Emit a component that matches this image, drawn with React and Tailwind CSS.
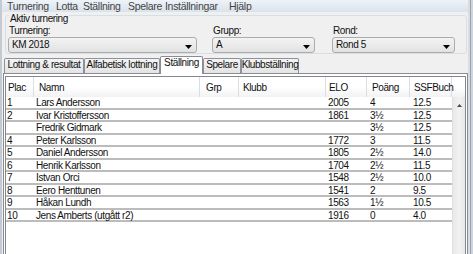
import React from 'react';

const MENU = [
  ['Turnering', 49],
  ['Lotta', 27],
  ['Ställning', 45],
  ['Spelare', 37],
  ['Inställningar', 64],
  ['Hjälp', 40],
];

const TABS = [
  { label: 'Lottning & resultat', w: 80 },
  { label: 'Alfabetisk lottning', w: 76 },
  { label: 'Ställning', w: 43, active: true },
  { label: 'Spelare', w: 38 },
  { label: 'Klubbställning', w: 58 },
];

// width, header padding, cell padding
const COLS = [
  { key: 'plac', title: 'Plac', w: 28, hp: 2, cp: 1 },
  { key: 'namn', title: 'Namn', w: 166, hp: 5, cp: 2 },
  { key: 'grp', title: 'Grp', w: 39, hp: 6, cp: 2 },
  { key: 'klubb', title: 'Klubb', w: 87, hp: 4, cp: 2 },
  { key: 'elo', title: 'ELO', w: 41, hp: 3, cp: 2 },
  { key: 'poang', title: 'Poäng', w: 43, hp: 5, cp: 3 },
  { key: 'buch', title: 'SSFBuch', w: 42, hp: 4, cp: 3 },
];

const ROWS = [
  { plac: '1', namn: 'Lars Andersson', elo: '2005', poang: '4', buch: '12.5' },
  { plac: '2', namn: 'Ivar Kristoffersson', elo: '1861', poang: '3½', buch: '12.5' },
  { plac: '', namn: 'Fredrik Gidmark', elo: '', poang: '3½', buch: '12.5' },
  { plac: '4', namn: 'Peter Karlsson', elo: '1772', poang: '3', buch: '11.5' },
  { plac: '5', namn: 'Daniel Andersson', elo: '1805', poang: '2½', buch: '14.0' },
  { plac: '6', namn: 'Henrik Karlsson', elo: '1704', poang: '2½', buch: '11.5' },
  { plac: '7', namn: 'Istvan Orci', elo: '1548', poang: '2½', buch: '10.0' },
  { plac: '8', namn: 'Eero Henttunen', elo: '1541', poang: '2', buch: '9.5' },
  { plac: '9', namn: 'Håkan Lundh', elo: '1563', poang: '1½', buch: '10.5' },
  { plac: '10', namn: 'Jens Amberts (utgått r2)', elo: '1916', poang: '0', buch: '4.0' },
];

function Combo({ value, w }) {
  return (
    <div
      className="h-[16px] flex items-center justify-between pl-[3px] pr-[4px] border border-[#acacac] rounded-[3px] bg-linear-to-b from-[#f3f3f3] to-[#e2e2e2]"
      style={{ width: w }}
    >
      <span className="leading-none">{value}</span>
      <svg width="7" height="4" viewBox="0 0 7 4" className="mt-[3px]">
        <path d="M0 0h7L3.5 4z" fill="#000" />
      </svg>
    </div>
  );
}

export default function App() {
  return (
    <div className="w-[473px] h-[254px] flex overflow-hidden bg-[#f0f0f0] text-[10px] leading-[12px] tracking-[-0.4px] text-[#111] font-['Liberation_Sans',Arial,sans-serif]">
      {/* left frame */}
      <div className="w-[2px] bg-[#c3cad2]" />

      <div className="w-[466px] flex flex-col">
        {/* menu bar */}
        <div className="h-[17px] flex items-center pl-[5px] bg-linear-to-b from-[#eef3f8] to-[#dae2ec] text-[#444] text-[10.5px] tracking-[-0.3px]">
          {MENU.map(([label, w]) => (
            <span key={label} style={{ width: w }} className="shrink-0">
              {label}
            </span>
          ))}
        </div>

        {/* Aktiv turnering */}
        <div className="relative mt-[3px] ml-[3px] w-[462px] h-[40px] border border-[#d5dfe5] rounded-[3px] pt-[9px] pl-[2px]">
          <span className="absolute left-[3px] -top-[3px] px-[1px] bg-[#f0f0f0]">
            Aktiv turnering
          </span>
          <div className="flex">
            <div className="w-[189px]">
              <div className="h-[12px] pl-[1px]">Turnering:</div>
              <Combo value="KM 2018" w={189} />
            </div>
            <div className="w-[103px] ml-[15px]">
              <div className="h-[12px] pl-[1px]">Grupp:</div>
              <Combo value="A" w={103} />
            </div>
            <div className="w-[123px] ml-[17px]">
              <div className="h-[12px] pl-[1px]">Rond:</div>
              <Combo value="Rond 5" w={123} />
            </div>
          </div>
        </div>

        {/* tabs */}
        <div className="mt-[2px] ml-[2px] h-[18px] flex items-end relative z-10">
          {TABS.map((t) =>
            t.active ? (
              <div
                key={t.label}
                style={{ width: t.w }}
                className="h-[18px] -mb-px flex justify-center bg-white border border-b-0 border-[#898c95] rounded-t-[2px]"
              >
                {t.label}
              </div>
            ) : (
              <div
                key={t.label}
                style={{ width: t.w }}
                className="h-[15px] flex justify-center bg-linear-to-b from-[#f4f4f4] to-[#e4e4e4] border border-b-0 border-[#8e9199] rounded-t-[2px]"
              >
                {t.label}
              </div>
            )
          )}
        </div>

        {/* tab panel */}
        <div className="ml-[1px] w-[465px] h-[200px] shrink-0 border border-[#898c95] bg-white px-[1px] pt-[2px]">
          <div className="h-full border border-[#828790] flex flex-col">
            {/* header */}
            <div className="h-[20px] flex bg-linear-to-b from-white via-white to-[#f1f2f4]">
              {COLS.map((c) => (
                <div
                  key={c.key}
                  style={{ width: c.w, paddingLeft: c.hp }}
                  className="h-full flex items-center pt-[2px] border-r border-[#dcdde0] shrink-0"
                >
                  {c.title}
                </div>
              ))}
              <div className="flex-1" />
            </div>

            <div className="flex flex-1">
              {/* rows */}
              <div className="w-[446px]">
                {ROWS.map((r, i) => (
                  <div key={i} className="h-[12.5px] flex border-b-2 border-[#bcbcbc] leading-[11px]">
                    {COLS.map((c) => (
                      <div key={c.key} style={{ width: c.w, paddingLeft: c.cp }} className="shrink-0 whitespace-nowrap">
                        {r[c.key] || ''}
                      </div>
                    ))}
                  </div>
                ))}
              </div>

              {/* scrollbar */}
              <div className="flex-1 bg-linear-to-r from-[#e8e8e8] via-[#f2f2f2] to-[#e8e8e8] border-l border-[#e0e0e0] flex justify-center pt-[7px]">
                <svg width="5" height="3" viewBox="0 0 5 3">
                  <path d="M2.5 0L5 3H0z" fill="#4a4a4a" />
                </svg>
              </div>
            </div>
          </div>
        </div>
      </div>

      {/* right frame */}
      <div className="w-[5px] flex">
        <div className="w-[2px] bg-[#d9dde2]" />
        <div className="w-[1px] bg-[#9aa2ab]" />
        <div className="flex-1 bg-[#cfd5dc]" />
      </div>
    </div>
  );
}
